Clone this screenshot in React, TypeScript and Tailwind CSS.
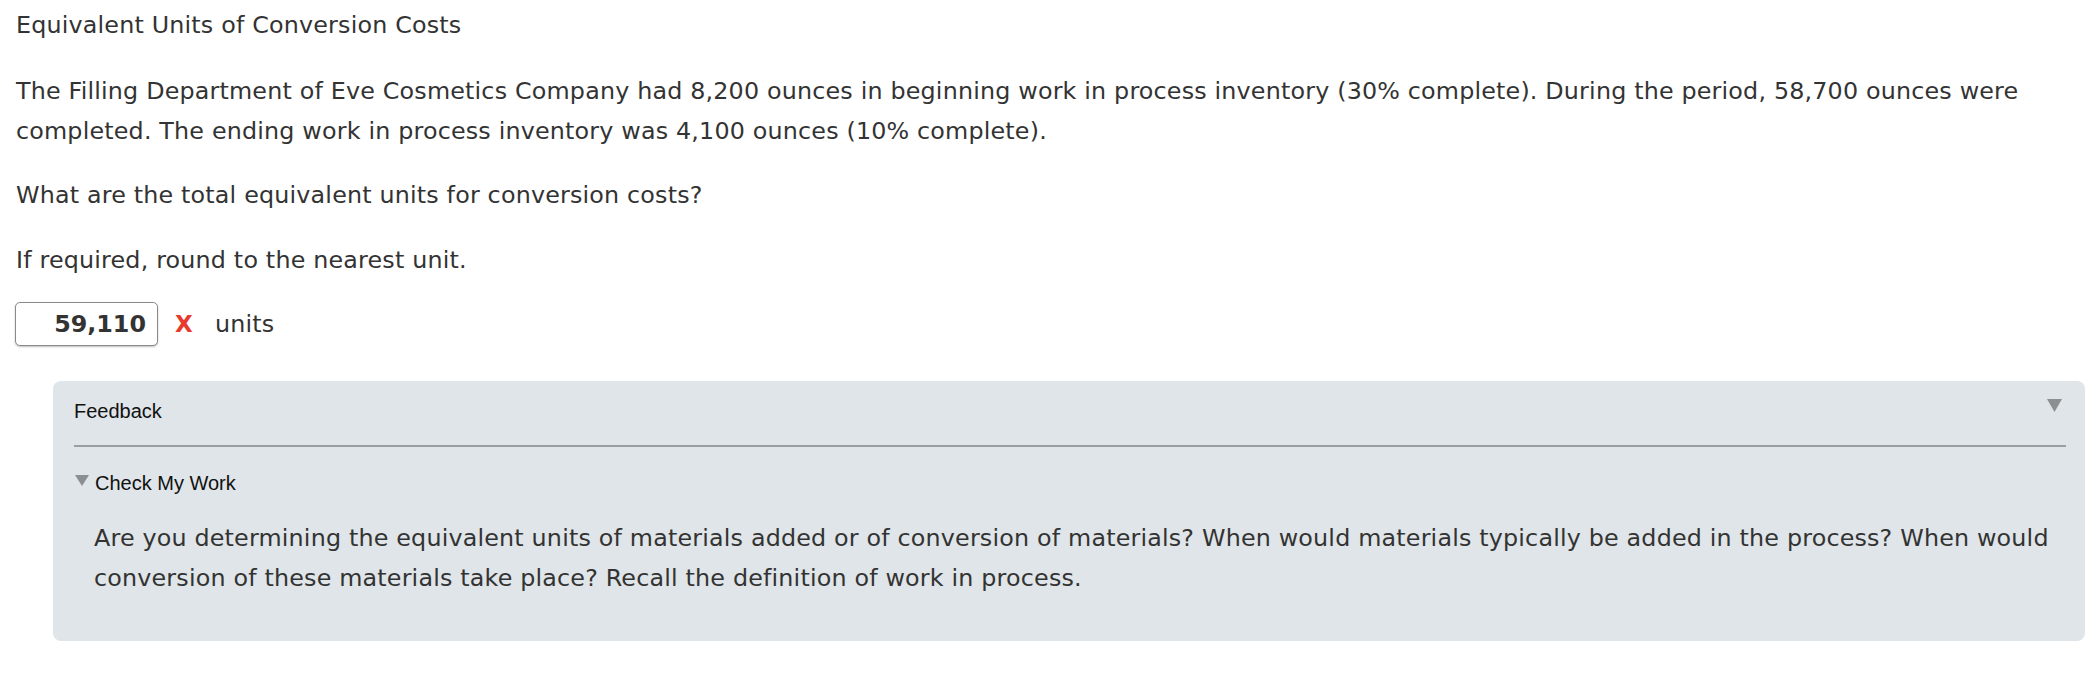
export default function App() {
  return (
    <div className="min-h-[680px] bg-white pl-4 pr-[11px] pt-[5px] text-[#333] font-['DejaVu_Sans',Verdana,sans-serif] text-[23.8px] leading-[40px] tracking-[0.18px]">
      <h1 className="font-normal">Equivalent Units of Conversion Costs</h1>
      <p className="mt-[26px]">
        The Filling Department of Eve Cosmetics Company had 8,200 ounces in beginning work in process inventory (30% complete). During the period, 58,700 ounces were completed. The ending work in process inventory was 4,100 ounces (10% complete).
      </p>
      <p className="mt-6">What are the total equivalent units for conversion costs?</p>
      <p className="mt-[25px]">If required, round to the nearest unit.</p>

      {/* answer row */}
      <div className="mt-[22px] -ml-px flex items-center">
        <div className="w-[143px] h-[44px] rounded-[5px] border-[1.5px] border-[#8a8a8a] bg-white shadow-[0_1px_2px_rgba(0,0,0,0.25)] flex items-center justify-end pr-[11px] font-bold tracking-normal">
          59,110
        </div>
        <span className="ml-[17px] text-[23px] font-bold text-[#e8392c]">X</span>
        <span className="ml-[22px]">units</span>
      </div>

      {/* feedback panel */}
      <div className="mt-[35px] ml-[37px] rounded-[8px] bg-[#dfe5e8] pl-[21px] pr-[19px] pt-[19px] pb-[43px]">
        <div className="flex items-start justify-between">
          <span className="font-['Liberation_Sans',Arial,sans-serif] text-[20px] leading-[23px] tracking-normal text-[#111]">Feedback</span>
          <svg width="15" height="13" viewBox="0 0 15 13" className="mt-[-1px] mr-[4px]">
            <polygon points="0,0 15,0 7.5,13" fill="#8c8f92" />
          </svg>
        </div>
        <div className="mt-[22px] h-[2px] bg-[#9a9ea1]" />
        <div className="mt-[25px] flex items-start">
          <svg width="14" height="11" viewBox="0 0 14 11" className="ml-px mt-[3px]">
            <polygon points="0,0 14,0 7,11" fill="#8c8f92" />
          </svg>
          <span className="ml-[6px] font-['Liberation_Sans',Arial,sans-serif] text-[20px] leading-[23px] tracking-normal text-[#111]">Check My Work</span>
        </div>
        <p className="mt-[23px] pl-[20px]">
          Are you determining the equivalent units of materials added or of conversion of materials? When would materials typically be added in the process? When would conversion of these materials take place? Recall the definition of work in process.
        </p>
      </div>
    </div>
  );
}
